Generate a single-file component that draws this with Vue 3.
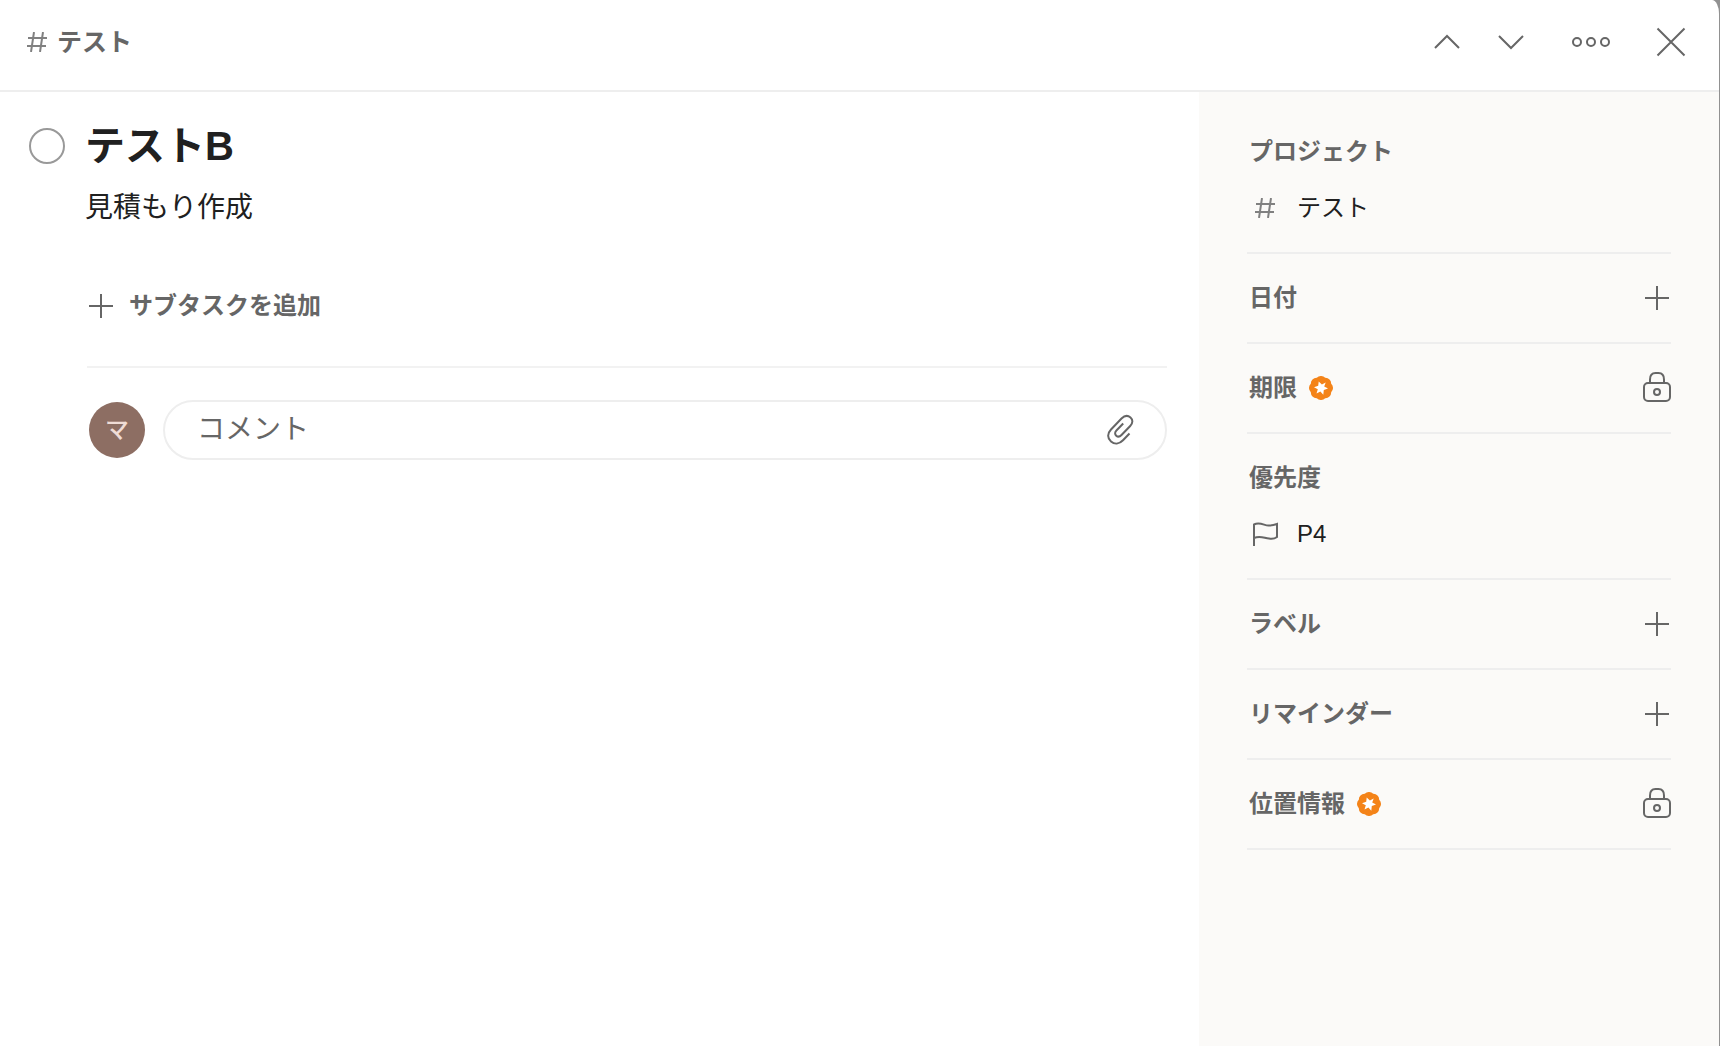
<script setup>
const sections = [
  { label: 'プロジェクト', value: 'テスト', icon: 'hash' },
  { label: '日付', action: 'add' },
  { label: '期限', badge: true, action: 'lock' },
  { label: '優先度', value: 'P4', icon: 'flag' },
  { label: 'ラベル', action: 'add' },
  { label: 'リマインダー', action: 'add' },
  { label: '位置情報', badge: true, action: 'lock' },
]
</script>

<template>
  <div class="dialog">
    <header class="topbar">
      <a class="crumb" href="#project">
        <svg class="hash" width="20" height="20" viewBox="0 0 20 20"><path d="M7 0 4 20M16 0l-3 20M1 6h19M0 14h19" /></svg>
        <span>テスト</span>
      </a>
      <nav class="tools">
        <button type="button" aria-label="前のタスク">
          <svg width="32" height="32" viewBox="0 0 32 32"><path d="M4 22 16 10l12 12" /></svg>
        </button>
        <button type="button" aria-label="次のタスク">
          <svg width="32" height="32" viewBox="0 0 32 32"><path d="M4 10l12 12 12-12" /></svg>
        </button>
        <button type="button" aria-label="その他">
          <svg width="40" height="32" viewBox="0 0 40 32"><circle cx="6" cy="16" r="4" /><circle cx="20" cy="16" r="4" /><circle cx="34" cy="16" r="4" /></svg>
        </button>
        <button type="button" aria-label="閉じる">
          <svg width="32" height="32" viewBox="0 0 32 32"><path d="M2.500 2.500l27 27M29.500 2.500l-27 27" /></svg>
        </button>
      </nav>
    </header>

    <div class="body">
      <main class="task">
        <input id="done" class="check" type="checkbox" aria-label="タスクを完了" />
        <div class="content">
          <h1>テストB</h1>
          <p class="desc">見積もり作成</p>
          <div class="details">
            <button type="button" class="add-sub">
              <svg width="24" height="24" viewBox="0 0 24 24"><path d="M12 0v24M0 12h24" /></svg>
              <span>サブタスクを追加</span>
            </button>
            <div class="comment">
              <span class="avatar">マ</span>
              <div class="field">
                <input type="text" placeholder="コメント" aria-label="コメント" />
                <button type="button" aria-label="ファイルを添付">
                  <svg width="28" height="32" viewBox="0 0 28 32"><path d="M22.500 19.500l-6.500 6.800c-3.800 4-8.500 4.200-12 1.200-3.800-3.300-3.800-8 0-12L14.500 4.500c3-3 6.500-3.200 9-1s2.500 5.500-.300 8.500L14.500 21c-1.800 1.900-3.800 2-5.300.700s-1.500-3.500.200-5.200l6.800-7" /></svg>
                </button>
              </div>
            </div>
          </div>
        </div>
      </main>

      <aside class="side">
        <section v-for="s in sections" :key="s.label">
          <div class="row">
            <h2>{{ s.label }}</h2>
            <svg v-if="s.badge" class="badge" width="24" height="24" viewBox="0 0 24 24">
              <path class="seal" d="M7.800 1.840A5.700 5.700 0 0 1 16.200 1.840 5.700 5.700 0 0 1 22.160 7.800 5.700 5.700 0 0 1 22.160 16.200 5.700 5.700 0 0 1 16.200 22.160 5.700 5.700 0 0 1 7.800 22.160 5.700 5.700 0 0 1 1.840 16.200 5.700 5.700 0 0 1 1.840 7.800 5.700 5.700 0 0 1 7.800 1.840z" />
              <path class="star" d="M9.700 5.500 12.900 8.600 16.700 6.500 15.200 10.600 19 12.500 14.800 14.100 14.300 18.700 11.400 15.400 7.500 17.500 8.800 13.300 5 11.300 9.200 9.800z" />
            </svg>
            <button v-if="s.action === 'add'" type="button" class="act" :aria-label="s.label + 'を追加'">
              <svg width="28" height="32" viewBox="0 0 28 32"><path d="M14 4v24M2 16h24" /></svg>
            </button>
            <button v-if="s.action === 'lock'" type="button" class="act" :aria-label="s.label + 'をアップグレード'">
              <svg width="28" height="32" viewBox="0 0 28 32"><rect x="1" y="11" width="26" height="18" rx="4" /><path d="M7 11V7.500C7 3.500 9 1 12.500 1h3C19 1 21 3.500 21 7.500V11" /><circle cx="14" cy="20" r="3" /></svg>
            </button>
          </div>
          <button v-if="s.value" type="button" class="value">
            <span class="slot">
              <svg v-if="s.icon === 'hash'" class="hash" width="20" height="20" viewBox="0 0 20 20"><path d="M7 0 4 20M16 0l-3 20M1 6h19M0 14h19" /></svg>
              <svg v-else width="26" height="24" viewBox="0 0 26 24"><path d="M2 24V2.500C8-.500 13 4 17 3.500c3 0 5-.500 8-1.500v13c-2 1.500-5 2-8 1.500-5-.500-9-3-15-.500" /></svg>
            </span>
            <span>{{ s.value }}</span>
          </button>
        </section>
      </aside>
    </div>
  </div>
</template>

<style>
body {
  background: #919191;
}
</style>

<style scoped>
.dialog {
  display: flex;
  flex-direction: column;
  min-height: 100vh;
  margin-right: 1px;
  overflow: hidden;
  border-top-right-radius: 7px 14px;
  background: #fff;
  color: #202020;
  font-family: "Liberation Sans", "Noto Sans CJK JP", sans-serif;
  font-size: 24px;
  line-height: 36px;
}

* {
  box-sizing: border-box;
}

button {
  display: flex;
  align-items: center;
  padding: 0;
  border: 0;
  background: none;
  color: inherit;
  font: inherit;
}

svg {
  display: block;
  flex: none;
  fill: none;
  stroke: #666;
  stroke-width: 2;
}

.hash {
  stroke: #808080;
}

h1,
h2,
p {
  margin: 0;
}

.topbar {
  display: flex;
  align-items: center;
  justify-content: space-between;
  height: 92px;
  padding: 0 32px 6px 27px;
  border-bottom: 2px solid #eee;
}

.crumb {
  display: flex;
  align-items: center;
  gap: 10px;
  color: #666;
  font-size: 25px;
  font-weight: 700;
  text-decoration: none;
}

.tools {
  display: flex;
  gap: 32px;
}

.tools button:nth-child(n + 3) {
  margin-left: 12px;
}

.body {
  display: flex;
  flex: 1;
}

.task {
  display: flex;
  flex: 1;
  align-items: flex-start;
  gap: 20px;
  padding: 26px 32px 0 29px;
}

.check {
  flex: none;
  width: 36px;
  height: 36px;
  margin: 10px 0 0;
  border: 2px solid #999;
  border-radius: 50%;
  appearance: none;
}

.content {
  flex: 1;
}

h1 {
  font-size: 40px;
  line-height: 56px;
}

.desc {
  padding-top: 16px;
  font-size: 28px;
  line-height: 36px;
}

.details {
  padding-left: 2px;
}

.add-sub {
  gap: 16px;
  width: 100%;
  padding: 62px 2px 42px;
  border-bottom: 2px solid #f2f2f2;
  color: #666;
  font-weight: 700;
}

.comment {
  display: flex;
  align-items: center;
  gap: 18px;
  padding: 32px 0 0 2px;
}

.avatar {
  flex: none;
  width: 56px;
  height: 56px;
  border-radius: 50%;
  background: #8d6e63;
  color: #efdcd6;
  font-weight: 500;
  line-height: 56px;
  text-align: center;
}

.field {
  display: flex;
  flex: 1;
  align-items: center;
  height: 60px;
  padding: 0 30px 0 32px;
  border: 2px solid #eee;
  border-radius: 30px;
}

.field input {
  flex: 1;
  min-width: 0;
  padding: 0;
  border: 0;
  outline: 0;
  background: none;
  font: inherit;
  font-size: 28px;
}

.field input::placeholder {
  color: #666;
  opacity: 1;
}

.side {
  width: 520px;
  padding: 16px 48px 0;
  background: #fbfaf8;
}

section {
  display: flex;
  flex-direction: column;
  gap: 20px;
  padding: 26px 0;
  border-bottom: 2px solid #eee;
}

.row {
  display: flex;
  align-items: center;
  height: 36px;
  padding-left: 2px;
}

h2 {
  color: #666;
  font-size: 24px;
  font-weight: 700;
}

.badge {
  margin-left: 12px;
  stroke: none;
}

.seal {
  fill: #f48318;
}

.star {
  fill: #fff;
}

.act {
  margin-left: auto;
}

.value {
  gap: 18px;
  padding: 0 4px;
}

.slot {
  display: flex;
  justify-content: center;
  width: 28px;
}
</style>
